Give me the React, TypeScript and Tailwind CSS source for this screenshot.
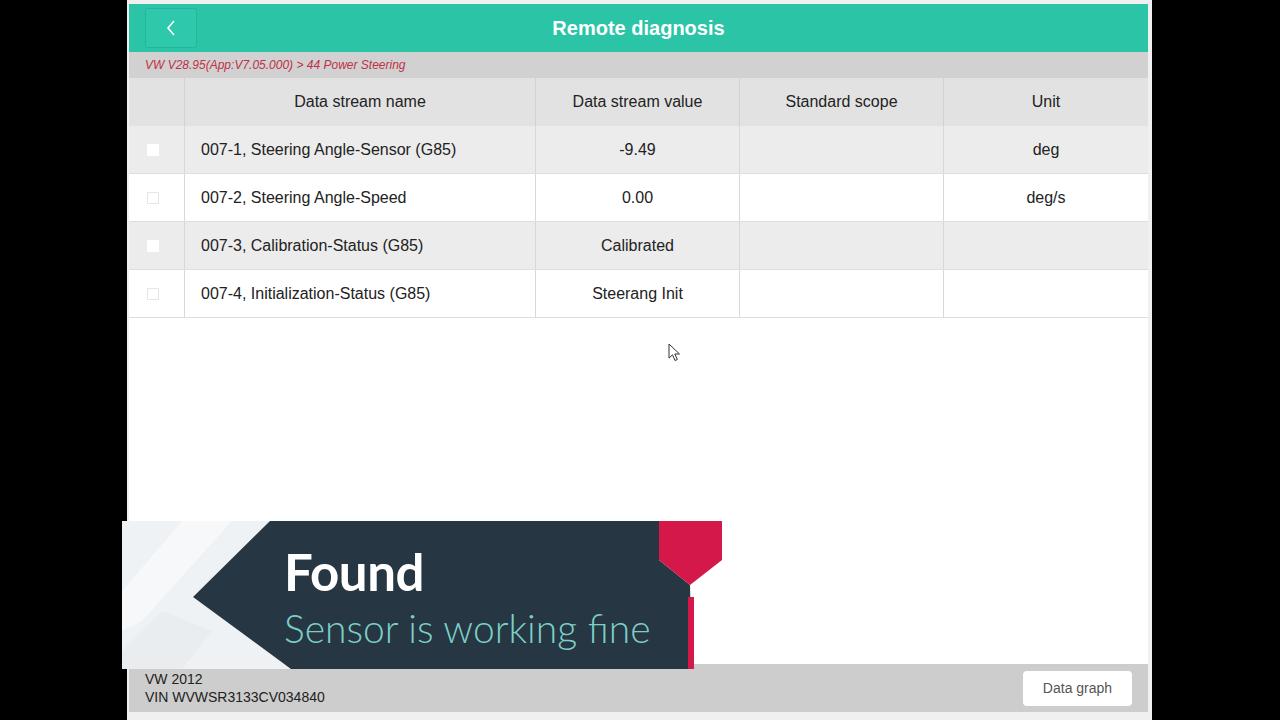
import React from 'react';

const rows = [
  { name: '007-1, Steering Angle-Sensor (G85)', value: '-9.49', scope: '', unit: 'deg' },
  { name: '007-2, Steering Angle-Speed', value: '0.00', scope: '', unit: 'deg/s' },
  { name: '007-3, Calibration-Status (G85)', value: 'Calibrated', scope: '', unit: '' },
  { name: '007-4, Initialization-Status (G85)', value: 'Steerang Init', scope: '', unit: '' },
];

const Banner = () => (
  <div className="absolute left-[122px] top-[521px] w-[600px] h-[148px]">
    <svg width="600" height="148" viewBox="0 0 600 148" className="absolute inset-0">
      <polygon points="0,0 150,0 71,76 169,148 0,148" fill="#eff2f4" />
      <polygon points="60,0 110,0 20,100 0,110 0,70" fill="#f6f8f9" />
      <polygon points="0,130 40,90 90,110 60,148 0,148" fill="#e9edef" />
      <polygon points="148,0 537,0 537,39 568,64 570,148 169,148 71,76" fill="#263642" />
      <polygon points="537,0 600,0 600,39 568,64 537,39" fill="#d4184a" />
      <rect x="566" y="76" width="6" height="72" fill="#d4184a" />
    </svg>
    <div className="absolute left-[162px] top-[25px] text-white font-bold text-[51px] leading-none tracking-[-0.5px] font-['Lato',sans-serif]">
      Found
    </div>
    <div className="absolute left-[162px] top-[88px] text-[#7ccfc6] font-light text-[39px] leading-none font-['Lato',sans-serif]">
      Sensor is working fine
    </div>
  </div>
);

const Cursor = () => (
  <svg className="absolute left-[668px] top-[343px]" width="14" height="20" viewBox="0 0 14 20">
    <path d="M1 1 L1 15 L4.5 11.8 L7 17.5 L9.3 16.5 L6.8 11 L11.5 11 Z" fill="#fff" stroke="#333" strokeWidth="1" strokeLinejoin="round" />
  </svg>
);

export default function App() {
  return (
    <div className="relative w-[1280px] h-[720px] bg-black overflow-hidden font-['Liberation_Sans',Arial,sans-serif]">
      <div className="ml-[127px] w-[1025px] h-[720px] bg-[#f0f0f0] pt-1 pl-[2px] pr-1 flex flex-col">
        {/* Header */}
        <div className="relative h-12 bg-[#2bc4a7] flex items-center justify-center">
          <button className="absolute left-[16px] top-[4px] w-[52px] h-[40px] rounded-[3px] border border-[#27b59a] bg-[#2ec9ac] flex items-center justify-center">
            <svg width="12" height="18" viewBox="0 0 12 18">
              <path d="M9 2 L3 9 L9 16" fill="none" stroke="#fff" strokeWidth="1.6" />
            </svg>
          </button>
          <h1 className="text-white font-bold text-[20px]">Remote diagnosis</h1>
        </div>

        {/* Breadcrumb */}
        <div className="h-[26px] bg-[#d1d1d1] flex items-center pl-[16px]">
          <span className="italic text-[12px] text-[#c03048]">VW V28.95(App:V7.05.000) &gt; 44 Power Steering</span>
        </div>

        {/* Table */}
        <div className="bg-white flex-1 flex flex-col">
          <div className="grid grid-cols-[56px_351px_204px_204px_204px] h-[48px] bg-[#e2e2e2] text-[16px] text-[#222]">
            <div className="border-r border-[#d2d2d2]" />
            <div className="flex items-center justify-center border-r border-[#d2d2d2]">Data stream name</div>
            <div className="flex items-center justify-center border-r border-[#d2d2d2]">Data stream value</div>
            <div className="flex items-center justify-center border-r border-[#d2d2d2]">Standard scope</div>
            <div className="flex items-center justify-center">Unit</div>
          </div>
          {rows.map((r, i) => (
            <div
              key={r.name}
              className={`grid grid-cols-[56px_351px_204px_204px_204px] h-[48px] text-[16px] text-[#222] border-b border-[#dedede] ${i % 2 === 0 ? 'bg-[#ececec]' : 'bg-white'}`}
            >
              <div className="flex items-center pl-[18px] border-r border-[#d8d8d8]">
                <div className={`w-[12px] h-[12px] bg-white ${i % 2 === 0 ? '' : 'border border-[#e6e6e6]'}`} />
              </div>
              <div className="flex items-center pl-[16px] border-r border-[#d8d8d8]">{r.name}</div>
              <div className="flex items-center justify-center border-r border-[#d8d8d8]">{r.value}</div>
              <div className="flex items-center justify-center border-r border-[#d8d8d8]">{r.scope}</div>
              <div className="flex items-center justify-center">{r.unit}</div>
            </div>
          ))}
        </div>

        {/* Bottom bar */}
        <div className="h-[48px] bg-[#cdcdcd] flex items-center justify-between pl-[16px] pr-[16px]">
          <div className="text-[14px] text-[#222] leading-[18px]">
            <div>VW 2012</div>
            <div>VIN WVWSR3133CV034840</div>
          </div>
          <button className="w-[109px] h-[35px] bg-white rounded-[4px] text-[14px] text-[#555]">Data graph</button>
        </div>
        <div className="h-[8px]" />
      </div>

      <Cursor />
      <Banner />
    </div>
  );
}
